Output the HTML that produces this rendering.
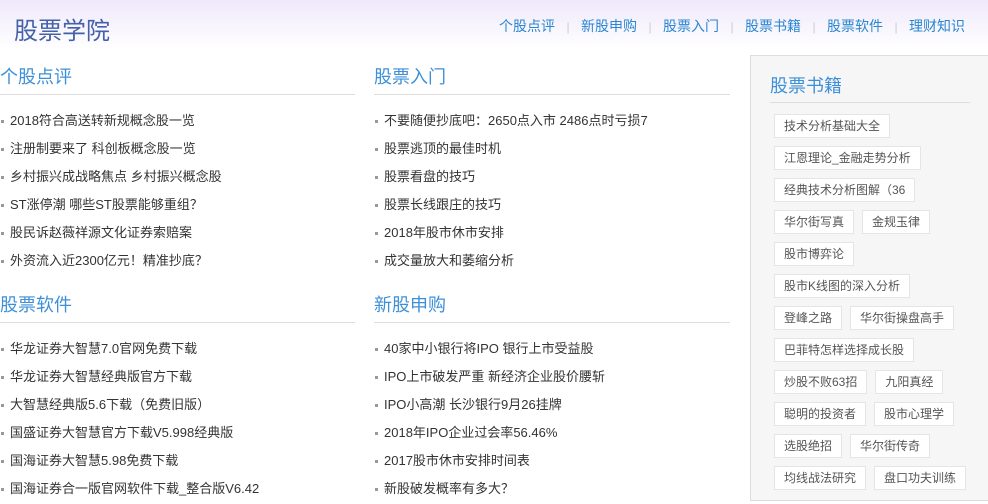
<!DOCTYPE html>
<html><head><meta charset="utf-8"><style>
*{margin:0;padding:0;box-sizing:border-box}
body{width:988px;height:504px;overflow:hidden;background:#fff;font-family:"Liberation Sans","WenQuanYi Zen Hei","Noto Sans CJK SC",sans-serif;position:relative}
.hdr{position:absolute;left:0;top:0;width:988px;height:50px;background:linear-gradient(#efe9fb,#fff)}
.logo{position:absolute;left:14px;top:11px;font-size:24px;color:#4360a8;letter-spacing:0px}
.nav{position:absolute;left:499px;top:16px;font-size:14px;color:#2a86d0;white-space:nowrap}
.nav span{display:inline-block;width:56px}
.nav i{display:inline-block;width:26px;text-align:center;color:#ccc;font-style:normal;font-size:12px}
.col{position:absolute;width:356px}
.col h2{font-size:18px;font-weight:normal;color:#3d90d8;height:32px;line-height:28px;border-bottom:1px solid #ddd;padding-left:0}
.col ul{list-style:none;margin-top:12px}
.col li{height:28px;line-height:28px;font-size:13px;color:#333;padding-left:10px;position:relative;white-space:nowrap}
.col li:before{content:"";position:absolute;left:1px;top:13px;width:3px;height:3px;background:#999}
.side{position:absolute;left:750px;top:55px;width:240px;height:446px;background:#f6f6f6;border:1px solid #ddd}
.side h2{position:absolute;left:19px;top:16px;font-size:18px;font-weight:normal;color:#3d90d8}
.side .ln{position:absolute;left:19px;top:46px;width:200px;height:1px;background:#ddd}
.tags{position:absolute;left:23px;top:58px;width:215px}
.tags a{display:inline-block;height:24px;line-height:22px;border:1px solid #e5e5e5;background:#fff;font-size:12px;color:#555;padding:0 9px;margin:0 8px 8px 0;white-space:nowrap;text-decoration:none}
</style></head><body>
<div class="hdr"></div>
<div class="logo">股票学院</div>
<div class="nav"><span>个股点评</span><i>|</i><span>新股申购</span><i>|</i><span>股票入门</span><i>|</i><span>股票书籍</span><i>|</i><span>股票软件</span><i>|</i><span>理财知识</span></div>

<div class="col" style="left:0;top:63px;width:355px"><h2>个股点评</h2><ul>
<li>2018符合高送转新规概念股一览</li><li>注册制要来了 科创板概念股一览</li><li>乡村振兴成战略焦点 乡村振兴概念股</li><li>ST涨停潮 哪些ST股票能够重组？</li><li>股民诉赵薇祥源文化证券索赔案</li><li>外资流入近2300亿元！精准抄底？</li></ul></div>

<div class="col" style="left:374px;top:63px;width:356px"><h2>股票入门</h2><ul>
<li>不要随便抄底吧：2650点入市 2486点时亏损7</li><li>股票逃顶的最佳时机</li><li>股票看盘的技巧</li><li>股票长线跟庄的技巧</li><li>2018年股市休市安排</li><li>成交量放大和萎缩分析</li></ul></div>

<div class="col" style="left:0;top:291px;width:355px"><h2>股票软件</h2><ul>
<li>华龙证券大智慧7.0官网免费下载</li><li>华龙证券大智慧经典版官方下载</li><li>大智慧经典版5.6下载（免费旧版）</li><li>国盛证券大智慧官方下载V5.998经典版</li><li>国海证券大智慧5.98免费下载</li><li>国海证券合一版官网软件下载_整合版V6.42</li></ul></div>

<div class="col" style="left:374px;top:291px;width:356px"><h2>新股申购</h2><ul>
<li>40家中小银行将IPO 银行上市受益股</li><li>IPO上市破发严重 新经济企业股价腰斩</li><li>IPO小高潮 长沙银行9月26挂牌</li><li>2018年IPO企业过会率56.46%</li><li>2017股市休市安排时间表</li><li>新股破发概率有多大？</li></ul></div>

<div class="side"><h2>股票书籍</h2><div class="ln"></div>
<div class="tags">
<a>技术分析基础大全</a><br><a>江恩理论_金融走势分析</a><br><a>经典技术分析图解（36</a><br><a>华尔街写真</a><a>金规玉律</a><br><a>股市博弈论</a><br><a>股市K线图的深入分析</a><br><a>登峰之路</a><a>华尔街操盘高手</a><br><a>巴菲特怎样选择成长股</a><br><a>炒股不败63招</a><a>九阳真经</a><br><a>聪明的投资者</a><a>股市心理学</a><br><a>选股绝招</a><a>华尔街传奇</a><br><a>均线战法研究</a><a>盘口功夫训练</a>
</div></div>
</body></html>
